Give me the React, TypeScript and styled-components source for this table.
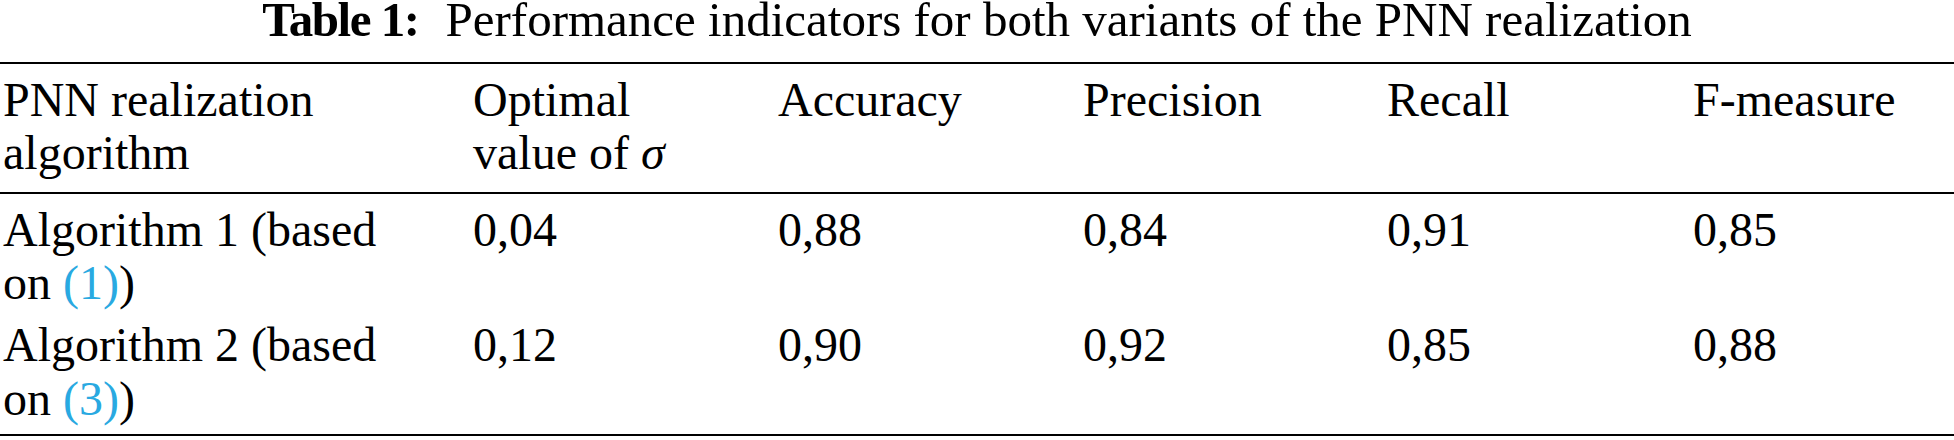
import React from "react";
import styled, { createGlobalStyle } from "styled-components";

const GlobalStyle = createGlobalStyle`
  html, body {
    margin: 0;
    padding: 0;
    background: #ffffff;
  }
  body {
    font-family: "Liberation Serif", "Times New Roman", serif;
    color: #000000;
  }
`;

const Figure = styled.figure`
  margin: 0;
  width: 1954px;
  font-family: "Liberation Serif", "Times New Roman", serif;
  font-size: 48px;
  color: #000;
`;

const Caption = styled.figcaption`
  height: 40px;
  line-height: 40px;
  font-size: 49px;
  text-align: center;
  white-space: nowrap;
  margin-bottom: 21.5px;
`;

const CaptionLabel = styled.b`
  font-weight: 700;
  letter-spacing: -1.5px;
  margin-right: 27px;
`;

const Table = styled.table`
  width: 100%;
  table-layout: fixed;
  border-collapse: separate;
  border-spacing: 0;
  font-family: "Liberation Serif", "Times New Roman", serif;
  font-size: 48px;
  color: #000;
`;

const Col = styled.col<{ $w?: number }>`
  width: ${(p) => (p.$w ? `${p.$w}px` : "auto")};
`;

const HeadCell = styled.th`
  font-weight: 400;
  text-align: left;
  vertical-align: top;
  line-height: 53.3px;
  padding: 9px 45px 12.6px 3px;
  border-top: 2px solid #000;
  border-bottom: 2px solid #000;
`;

const BodyRow = styled.tr`
  &:first-child td {
    padding-top: 9.4px;
  }
  &:last-child td {
    padding-bottom: 9px;
    border-bottom: 2px solid #000;
  }
`;

const Cell = styled.td`
  text-align: left;
  vertical-align: top;
  line-height: 53.3px;
  padding: 4.4px 45px 4.4px 3px;
`;

const Sigma = styled.i`
  font-style: italic;
`;

const Ref = styled.a`
  color: #29a9e1;
  text-decoration: none;
`;

const headers: React.ReactNode[] = [
  "PNN realization algorithm",
  <>
    Optimal value of <Sigma>σ</Sigma>
  </>,
  "Accuracy",
  "Precision",
  "Recall",
  "F-measure",
];

const rows = [
  { algo: "Algorithm 1 (based on ", ref: "(1)", values: ["0,04", "0,88", "0,84", "0,91", "0,85"] },
  { algo: "Algorithm 2 (based on ", ref: "(3)", values: ["0,12", "0,90", "0,92", "0,85", "0,88"] },
];

export default function App() {
  return (
    <>
      <GlobalStyle />
      <Figure>
        <Caption>
          <CaptionLabel>Table 1:</CaptionLabel>
          Performance indicators for both variants of the PNN realization
        </Caption>
        <Table>
          <colgroup>
            <Col $w={470} />
            <Col $w={305} />
            <Col $w={305} />
            <Col $w={304} />
            <Col $w={306} />
            <Col />
          </colgroup>
          <thead>
            <tr>
              {headers.map((h, i) => (
                <HeadCell key={i}>{h}</HeadCell>
              ))}
            </tr>
          </thead>
          <tbody>
            {rows.map((r) => (
              <BodyRow key={r.ref}>
                <Cell>
                  {r.algo}
                  <Ref href="#">{r.ref}</Ref>)
                </Cell>
                {r.values.map((v, i) => (
                  <Cell key={i}>{v}</Cell>
                ))}
              </BodyRow>
            ))}
          </tbody>
        </Table>
      </Figure>
    </>
  );
}
